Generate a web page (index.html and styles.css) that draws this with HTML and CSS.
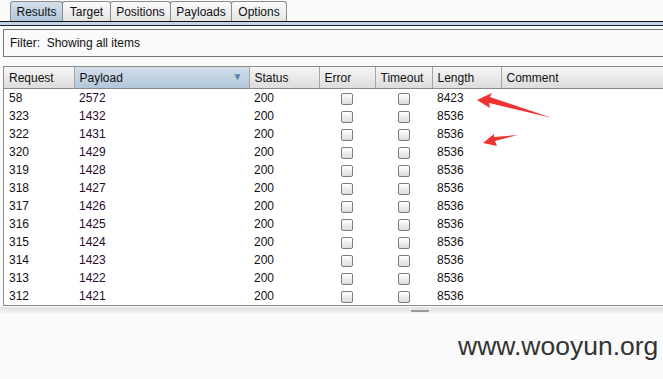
FILE: index.html
```html
<!DOCTYPE html>
<html lang="en">
<head>
    <meta charset="UTF-8">
    <title>Intruder Results</title>
    <link rel="stylesheet" href="styles.css">
</head>
<body>
    <div class="tabs">
        <div class="tab active t-results">Results</div>
        <div class="tab t-target">Target</div>
        <div class="tab t-positions">Positions</div>
        <div class="tab t-payloads">Payloads</div>
        <div class="tab t-options">Options</div>
    </div>
    <div class="tab-line"></div>

    <div class="filter">Filter:&nbsp; Showing all items</div>

    <div class="results">
        <table>
            <colgroup>
                <col style="width:70px">
                <col style="width:175px">
                <col style="width:70px">
                <col style="width:56px">
                <col style="width:57px">
                <col style="width:69px">
                <col>
            </colgroup>
            <thead>
                <tr>
                    <th>Request</th>
                    <th class="sorted">Payload <span class="arrow">&#9660;</span></th>
                    <th>Status</th>
                    <th>Error</th>
                    <th>Timeout</th>
                    <th>Length</th>
                    <th>Comment</th>
                </tr>
            </thead>
            <tbody id="rows"></tbody>
        </table>
    </div>

    <div class="splitter"><span class="grip"></span></div>

    <div class="watermark">www.wooyun.org</div>

    <svg class="marks" width="663" height="379" viewBox="0 0 663 379">
        <path d="M477 100 L492 93 L490 97 L552 118 L489 103 L490 108 Z" fill="#ee3333"/>
        <path d="M483 143 L494 134 L494 137 L518 135 L495 141 L497 146 Z" fill="#ee3333"/>
    </svg>

    <script>
        // righe della tabella risultati
        const data = [
            [58, 2572, 8423], [323, 1432, 8536], [322, 1431, 8536], [320, 1429, 8536],
            [319, 1428, 8536], [318, 1427, 8536], [317, 1426, 8536], [316, 1425, 8536],
            [315, 1424, 8536], [314, 1423, 8536], [313, 1422, 8536], [312, 1421, 8536]
        ];
        const body = document.getElementById('rows');
        data.forEach(function (r) {
            const tr = document.createElement('tr');
            tr.innerHTML = `
                <td>${r[0]}</td>
                <td class="payload">${r[1]}</td>
                <td>200</td>
                <td class="check"><span class="box"></span></td>
                <td class="check"><span class="box"></span></td>
                <td>${r[2]}</td>
                <td></td>
            `;
            body.appendChild(tr);
        });
    </script>
</body>
</html>
```

FILE: styles.css
```css
body {
    margin: 0;
    width: 663px;
    height: 379px;
    overflow: hidden;
    background-color: #fafafa;
    font-family: "Liberation Sans", Arial, sans-serif;
    font-size: 12px;
    color: #111;
    position: relative;
}

.tabs {
    display: flex;
    padding-left: 10px;
    height: 21px;
    align-items: flex-end;
}

.tab {
    height: 20px;
    line-height: 20px;
    text-align: center;
    border: 1px solid #8c8c8c;
    border-bottom: none;
    margin-right: -1px;
    border-radius: 3px 3px 0 0;
    background: linear-gradient(#fbfbfb, #e4e4e4);
    color: #111;
    box-sizing: border-box;
}

.t-results { width: 53px; }
.t-target { width: 49px; }
.t-positions { width: 61px; }
.t-payloads { width: 62px; }
.t-options { width: 56px; }

.tab.active {
    background: linear-gradient(#d4e0ec, #b2c6da);
}

.tab-line {
    height: 3px;
    border-top: 1px solid #111;
    border-bottom: 1px solid #222;
    background-color: #c3d4e6;
}

.filter {
    margin: 3px 0 0 3px;
    height: 26px;
    line-height: 26px;
    padding-left: 6px;
    border: 1px solid #777;
    border-right: none;
    background-color: #fafafa;
}

.results {
    margin: 9px 0 0 3px;
    border: 1px solid #8a8a8a;
    border-right: none;
    background-color: #fff;
    height: 238px;
}

table {
    border-collapse: collapse;
    table-layout: fixed;
    width: 660px;
}

th {
    height: 21px;
    padding: 0 0 0 5px;
    text-align: left;
    font-weight: normal;
    background: linear-gradient(#f6f6f6, #dcdcdc);
    border-right: 1px solid #a4a4a4;
    border-bottom: 1px solid #8a8a8a;
    position: relative;
}

th.sorted {
    background: linear-gradient(#d2dfeb, #b2c6d9);
}

.arrow {
    position: absolute;
    right: 6px;
    top: 4px;
    font-size: 10px;
    color: #5d82aa;
}

td {
    height: 18px;
    padding: 0 0 0 5px;
    white-space: nowrap;
}

td.payload {
    color: #2a0a30;
}

td.check {
    padding: 0;
    text-align: center;
}

.box {
    display: inline-block;
    width: 10px;
    height: 10px;
    vertical-align: middle;
    border: 1px solid #7d7d7d;
    border-radius: 2px;
    background: linear-gradient(#ffffff, #dcdcdc);
}

.splitter {
    margin-top: 1px;
    height: 6px;
    background: linear-gradient(#e0e0e0, #f2f2f2);
    position: relative;
}

.grip {
    position: absolute;
    left: 411px;
    top: 3px;
    width: 18px;
    height: 2px;
    background-color: #9a9a9a;
}

.watermark {
    position: absolute;
    left: 458px;
    top: 333px;
    font-size: 26.5px;
    line-height: 1;
    color: #333;
}

.marks {
    position: absolute;
    left: 0;
    top: 0;
}
```
